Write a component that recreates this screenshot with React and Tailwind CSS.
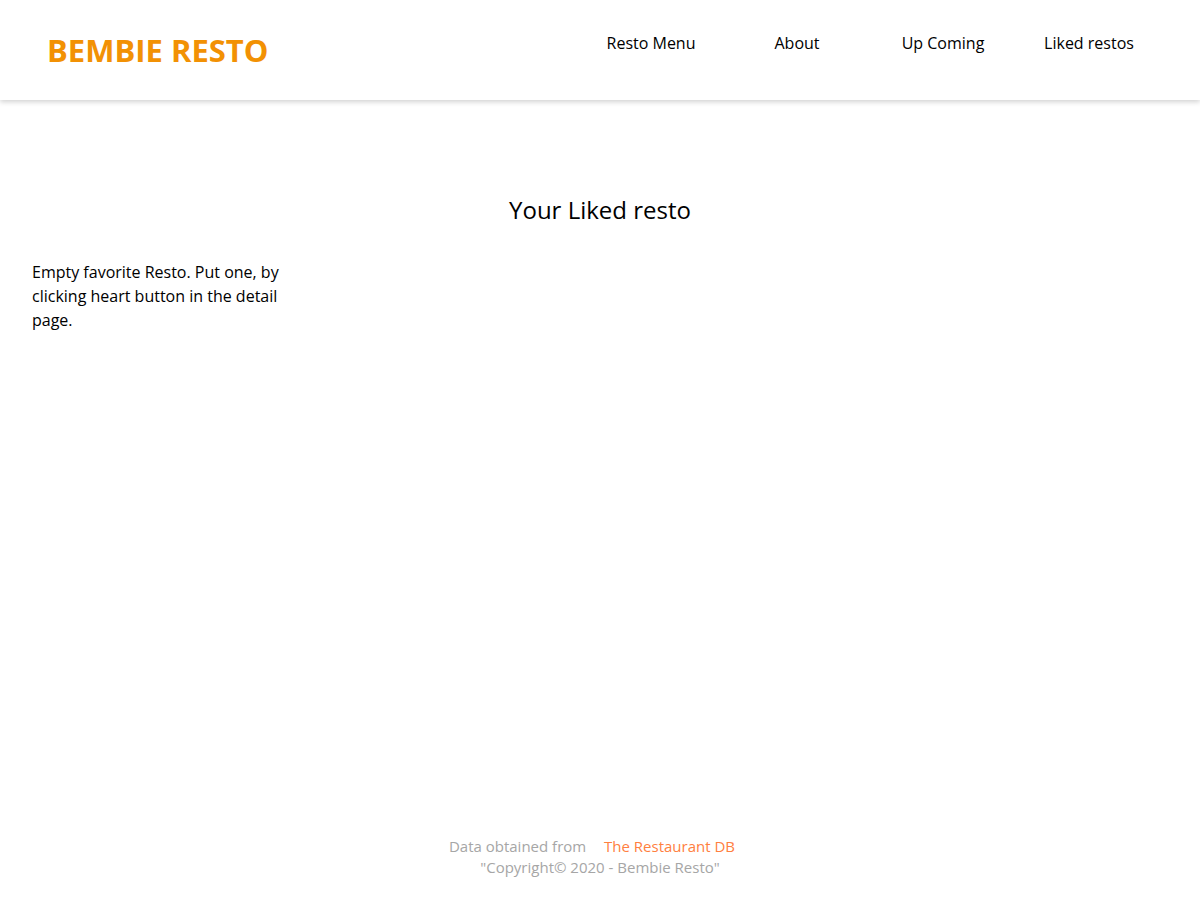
const navLinks = ["Resto Menu", "About", "Up Coming", "Liked restos"];

export default function App() {
  return (
    <div className="flex min-h-screen flex-col bg-white text-black" style={{ fontFamily: '"Open Sans", "Liberation Sans", sans-serif' }}>
      <header className="flex h-[100px] items-center justify-between bg-white pl-[47px] pr-[38px] shadow-[0_2px_5px_rgba(0,0,0,0.18)]">
        <h1 className="text-[31px] font-bold leading-none text-[#f29104]">BEMBIE RESTO</h1>
        <nav className="-mt-[14px] flex">
          {navLinks.map((label) => (
            <a key={label} href="#" className="w-[146px] text-center text-[16px] text-black">
              {label}
            </a>
          ))}
        </nav>
      </header>

      <main className="flex-1 px-8 pt-[94px]">
        <h2 className="text-center text-[24px] leading-8">Your Liked resto</h2>
        <p className="mt-[34px] w-[270px] text-[16px] leading-6">
          Empty favorite Resto. Put one, by clicking heart button in the detail page.
        </p>
      </main>

      <footer className="flex flex-col items-center pb-[22px] text-[15px] leading-[21px] text-[#a6a6a6]">
        <p className="-ml-4">
          Data obtained from <a href="#" className="ml-[14px] text-[#ff8040]">The Restaurant DB</a>
        </p>
        <p>"Copyright© 2020 - Bembie Resto"</p>
      </footer>
    </div>
  );
}
